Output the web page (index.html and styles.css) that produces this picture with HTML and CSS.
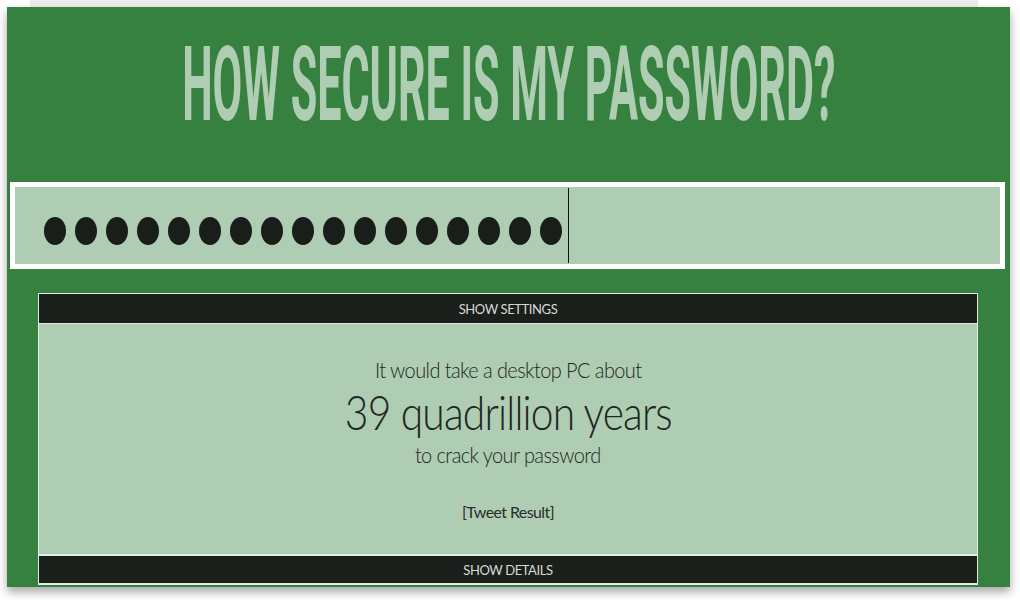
FILE: index.html
```html
<!DOCTYPE html>
<html lang="en">
<head>
<meta charset="utf-8">
<title>How Secure Is My Password?</title>
<link rel="stylesheet" href="styles.css">
</head>
<body>
<div class="topstrip"></div>
<main class="frame">
  <header class="masthead">
    <h1 class="title">HOW SECURE IS MY PASSWORD?</h1>
  </header>
  <div class="field" aria-label="password">
    <span class="dot"></span><span class="dot"></span><span class="dot"></span><span class="dot"></span><span class="dot"></span><span class="dot"></span><span class="dot"></span><span class="dot"></span><span class="dot"></span><span class="dot"></span><span class="dot"></span><span class="dot"></span><span class="dot"></span><span class="dot"></span><span class="dot"></span><span class="dot"></span><span class="dot"></span><span class="caret"></span>
  </div>
  <section class="panel">
    <div class="bar bar-top">SHOW SETTINGS</div>
    <div class="result">
      <p class="line-small">It would take a desktop PC about</p>
      <p class="line-big">39 quadrillion years</p>
      <p class="line-small line-after">to crack your password</p>
      <p class="tweet">[Tweet Result]</p>
    </div>
    <div class="bar bar-bottom">SHOW DETAILS</div>
  </section>
</main>
</body>
</html>
```

FILE: styles.css
```css
html, body {
  margin: 0;
  padding: 0;
  background: #ffffff;
}

body {
  width: 1020px;
  height: 600px;
  overflow: hidden;
  font-family: Lato, "Open Sans", sans-serif;
}

.topstrip {
  height: 7px;
  margin: 0 42px 0 30px;
  background: #ededed;
}

.frame {
  margin: 0 10px 0 7px;
  height: 580px;
  background: #378140;
  box-shadow: 0 5px 9px rgba(0, 0, 0, 0.35);
  display: flex;
  flex-direction: column;
}

.masthead {
  height: 175px;
  display: flex;
  justify-content: center;
  align-items: flex-start;
  overflow: visible;
}

.title {
  margin: 26px 0 0 0;
  flex: none;
  white-space: nowrap;
  font-family: Roboto, "Liberation Sans", sans-serif;
  font-weight: 700;
  font-size: 104px;
  line-height: 104px;
  color: #aecdb2;
  letter-spacing: 0;
  transform: scaleX(0.414);
  transform-origin: center;
}

.field {
  margin: 0 5px 0 3px;
  border: 5px solid #ffffff;
  background: #afcdb3;
  display: flex;
  align-items: flex-start;
  padding: 30px 0 0 29px;
  box-sizing: content-box;
  height: 47px;
  gap: 9px;
}

.dot {
  width: 22px;
  height: 28px;
  border-radius: 50%;
  background: #1a1e1b;
  flex: none;
}

.caret {
  width: 1px;
  height: 75px;
  margin-top: -29px;
  margin-left: -3px;
  background: #111;
  flex: none;
}

.panel {
  margin: 24px 32px 2px 31px;
  border: 1px solid #e3ebe3;
  border-bottom-width: 2px;
  display: flex;
  flex-direction: column;
  flex: 1;
}

.bar {
  background: #1b1f1c;
  color: #d6dad6;
  font-family: Lato, sans-serif;
  font-weight: 400;
  font-size: 13px;
  letter-spacing: -0.4px;
  text-align: center;
  display: flex;
  align-items: center;
  justify-content: center;
}

.bar-top {
  height: 29px;
  border-bottom: 1px solid #e3ebe3;
}

.bar-bottom {
  height: 27px;
  border-top: 2px solid #e3ebe3;
}

.result {
  flex: 1;
  background: #afcdb3;
  color: #222622;
  text-align: center;
  display: flex;
  flex-direction: column;
  align-items: center;
  padding-top: 33px;
}

.result p {
  margin: 0;
  white-space: nowrap;
}

.line-small {
  font-weight: 300;
  font-size: 21px;
  line-height: 26px;
  letter-spacing: -0.6px;
  transform: scaleX(0.95);
}

.line-big {
  font-weight: 300;
  font-size: 48px;
  line-height: 54px;
  letter-spacing: -1px;
  margin-top: 2px !important;
  transform: scaleX(0.85);
}

.line-after {
  margin-top: 3px !important;
}

.tweet {
  margin-top: 34px !important;
  font-weight: 400;
  font-size: 16px;
  line-height: 20px;
  letter-spacing: -0.6px;
  color: #2a2e2a;
}
```
